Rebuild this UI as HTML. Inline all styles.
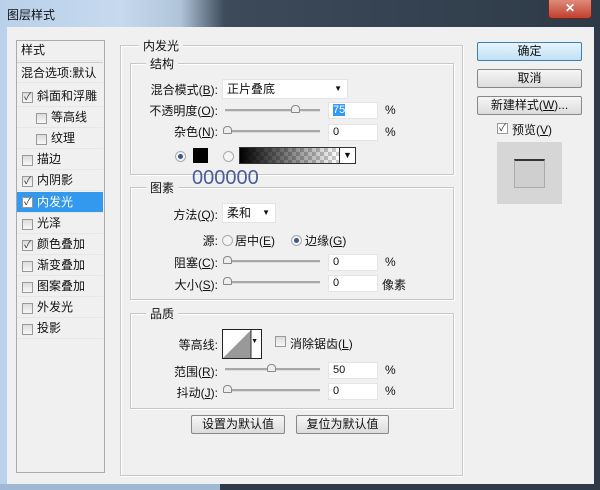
<!DOCTYPE html>
<html><head><meta charset="utf-8"><style>
*{margin:0;padding:0;box-sizing:border-box}
body{width:600px;height:490px;overflow:hidden;position:relative;background:#f0f0f0;font-family:"Liberation Sans","Noto Sans CJK SC",sans-serif;font-size:12px;color:#111}
.a{position:absolute;white-space:nowrap}
.title{left:0;top:0;width:600px;height:27px;background:linear-gradient(90deg,#b9d1ea 0%,#c6d9ee 20%,#b0c4da 30%,#3c4a5a 37.5%,#2e3a47 100%)}
.lbl{text-align:right;width:100px}
.box{position:absolute;border:1px solid #c8c8c8;box-shadow:1px 1px 0 #fff inset,1px 1px 0 #fff}
.gt{position:absolute;background:#f0f0f0;padding:0 4px;font-size:12px}
.inp{position:absolute;background:#fff;border:1px solid #e4e4e4;height:17px;padding-left:4px;line-height:15px;font-size:11px}
.sl{position:absolute;height:3px;background:#a8a8a8;border-bottom:1px solid #ddd}
.th{position:absolute;width:9px;height:8px;top:-4px;background:#eee;border:1px solid #888;border-radius:4px 4px 1px 1px}
.cb{position:absolute;width:11px;height:11px;border:1px solid #999;background:linear-gradient(#ddd,#f8f8f8);font-size:10px;line-height:9px;text-align:center;color:#333}
.btn{position:absolute;height:19px;border:1px solid #888;border-radius:2px;background:linear-gradient(#f6f6f6,#dcdcdc);text-align:center;line-height:17px;font-size:12px}
.rd{position:absolute;width:11px;height:11px;border-radius:50%;border:1px solid #aaa;background:#f4f4f4}
.rd.on::after{content:"";position:absolute;left:2px;top:2px;width:5px;height:5px;border-radius:50%;background:#3a5a8a}
.li{position:absolute;left:17px;width:86px;height:21px;line-height:21px;border-bottom:1px solid #e6e6e6}
</style></head><body>
<div class="a title"></div>
<div class="a" style="left:7px;top:6px;font-size:12px">图层样式</div>
<div class="a" style="left:548px;top:0;width:44px;height:19px;background:linear-gradient(#e08a7a,#c0402e);border:1px solid #6a2a22;border-top:none;border-radius:0 0 4px 4px;color:#fff;text-align:center;font-weight:bold;line-height:17px">✕</div>
<div class="a" style="left:0;top:27px;width:7px;height:463px;background:#b9d1ea"></div>
<div class="a" style="left:594px;top:27px;width:6px;height:463px;background:#2e3a47"></div>
<div class="a" style="left:0;top:484px;width:600px;height:6px;background:#2e3a47"></div>
<div class="a" style="left:0;top:484px;width:220px;height:6px;background:#9fb8d4"></div>

<div class="a" style="left:16px;top:40px;width:89px;height:433px;border:1px solid #aaa;background:#f0f0f0"></div>
<div class="li" style="top:40px;padding-left:4px">样式</div>
<div class="li" style="top:62px;padding-left:4px;border-top:1px solid #ccc">混合选项:默认</div>
<div class="li" style="top:86px;padding-left:20px">斜面和浮雕</div><div class="cb" style="left:22px;top:92px">✓</div>
<div class="li" style="top:107px;padding-left:34px">等高线</div><div class="cb" style="left:36px;top:113px"></div>
<div class="li" style="top:128px;padding-left:34px">纹理</div><div class="cb" style="left:36px;top:134px"></div>
<div class="li" style="top:149px;padding-left:20px">描边</div><div class="cb" style="left:22px;top:155px"></div>
<div class="li" style="top:170px;padding-left:20px">内阴影</div><div class="cb" style="left:22px;top:176px">✓</div>
<div class="li" style="top:192px;padding-left:20px;background:#3399ee;color:#fff">内发光</div><div class="cb" style="left:22px;top:197px;background:#fff">✓</div>
<div class="li" style="top:213px;padding-left:20px">光泽</div><div class="cb" style="left:22px;top:219px"></div>
<div class="li" style="top:234px;padding-left:20px">颜色叠加</div><div class="cb" style="left:22px;top:240px">✓</div>
<div class="li" style="top:255px;padding-left:20px">渐变叠加</div><div class="cb" style="left:22px;top:261px"></div>
<div class="li" style="top:276px;padding-left:20px">图案叠加</div><div class="cb" style="left:22px;top:282px"></div>
<div class="li" style="top:297px;padding-left:20px">外发光</div><div class="cb" style="left:22px;top:303px"></div>
<div class="li" style="top:318px;padding-left:20px">投影</div><div class="cb" style="left:22px;top:324px"></div>

<div class="box" style="left:120px;top:45px;width:343px;height:431px"></div>
<div class="gt" style="left:139px;top:37px">内发光</div>
<div class="box" style="left:130px;top:63px;width:324px;height:112px"></div>
<div class="gt" style="left:146px;top:55px">结构</div>
<div class="a lbl" style="left:118px;top:81px">混合模式(<u>B</u>):</div>
<div class="inp" style="left:222px;top:79px;width:126px;height:20px;font-size:12px;line-height:18px">正片叠底<span style="position:absolute;right:5px;font-size:8px">▼</span></div>
<div class="a lbl" style="left:118px;top:102px">不透明度(<u>O</u>):</div>
<div class="sl" style="left:225px;top:109px;width:95px"><div class="th" style="left:66px"></div></div>
<div class="inp" style="left:328px;top:102px;width:50px"><span style="background:#3399ff;color:#fff">75</span></div>
<div class="a" style="left:385px;top:103px">%</div>
<div class="a lbl" style="left:118px;top:123px">杂色(<u>N</u>):</div>
<div class="sl" style="left:225px;top:130px;width:95px"><div class="th" style="left:-2px"></div></div>
<div class="inp" style="left:328px;top:124px;width:50px">0</div>
<div class="a" style="left:385px;top:125px">%</div>
<div class="rd on" style="left:175px;top:151px"></div>
<div class="a" style="left:193px;top:148px;width:15px;height:15px;background:#000"></div>
<div class="rd" style="left:223px;top:151px"></div>
<div class="a" style="left:239px;top:147px;width:117px;height:17px;border:1px solid #333;background:repeating-conic-gradient(#ccc 0 25%,#fff 0 50%) 0 0/8px 8px"><div style="position:absolute;left:0;top:0;width:98px;height:15px;background:linear-gradient(90deg,#000,rgba(0,0,0,0))"></div><div style="position:absolute;right:0;top:0;width:16px;height:15px;background:#fff;border-left:1px solid #333;font-size:9px;text-align:center;line-height:15px">▼</div></div>
<div class="a" style="left:192px;top:167px;font-size:20px;color:#4a5c9a">000000</div>

<div class="box" style="left:130px;top:187px;width:324px;height:113px"></div>
<div class="gt" style="left:146px;top:179px">图素</div>
<div class="a lbl" style="left:118px;top:206px">方法(<u>Q</u>):</div>
<div class="inp" style="left:222px;top:203px;width:54px;height:20px;font-size:12px;line-height:18px">柔和<span style="position:absolute;right:5px;font-size:8px">▼</span></div>
<div class="a lbl" style="left:118px;top:232px">源:</div>
<div class="rd" style="left:222px;top:235px"></div><div class="a" style="left:235px;top:232px">居中(<u>E</u>)</div>
<div class="rd on" style="left:291px;top:235px"></div><div class="a" style="left:305px;top:232px">边缘(<u>G</u>)</div>
<div class="a lbl" style="left:118px;top:254px">阻塞(<u>C</u>):</div>
<div class="sl" style="left:225px;top:260px;width:95px"><div class="th" style="left:-2px"></div></div>
<div class="inp" style="left:328px;top:254px;width:50px">0</div>
<div class="a" style="left:385px;top:255px">%</div>
<div class="a lbl" style="left:118px;top:276px">大小(<u>S</u>):</div>
<div class="sl" style="left:225px;top:281px;width:95px"><div class="th" style="left:-2px"></div></div>
<div class="inp" style="left:328px;top:275px;width:50px">0</div>
<div class="a" style="left:382px;top:276px">像素</div>

<div class="box" style="left:130px;top:313px;width:324px;height:96px"></div>
<div class="gt" style="left:146px;top:305px">品质</div>
<div class="a lbl" style="left:118px;top:336px">等高线:</div>
<div class="a" style="left:222px;top:329px;width:40px;height:30px;border:1px solid #222;background:#fff;overflow:hidden">
<svg width="40" height="30" style="position:absolute;left:0;top:0"><polygon points="0,28 28,0 28,28" fill="#999"/><line x1="28" y1="0" x2="28" y2="30" stroke="#333"/></svg>
<span style="position:absolute;right:3px;top:8px;font-size:7px">▼</span></div>
<div class="cb" style="left:275px;top:336px"></div>
<div class="a" style="left:290px;top:335px">消除锯齿(<u>L</u>)</div>
<div class="a lbl" style="left:118px;top:363px">范围(<u>R</u>):</div>
<div class="sl" style="left:225px;top:368px;width:95px"><div class="th" style="left:42px"></div></div>
<div class="inp" style="left:328px;top:362px;width:50px">50</div>
<div class="a" style="left:385px;top:363px">%</div>
<div class="a lbl" style="left:118px;top:384px">抖动(<u>J</u>):</div>
<div class="sl" style="left:225px;top:389px;width:95px"><div class="th" style="left:-2px"></div></div>
<div class="inp" style="left:328px;top:383px;width:50px">0</div>
<div class="a" style="left:385px;top:384px">%</div>

<div class="btn" style="left:191px;top:415px;width:94px">设置为默认值</div>
<div class="btn" style="left:296px;top:415px;width:93px">复位为默认值</div>

<div class="btn" style="left:477px;top:42px;width:105px;border-color:#3c7fb1;background:linear-gradient(#e8f4fc,#bfe0f5)">确定</div>
<div class="btn" style="left:477px;top:69px;width:105px">取消</div>
<div class="btn" style="left:477px;top:96px;width:105px">新建样式(<u>W</u>)...</div>
<div class="cb" style="left:497px;top:123px;background:#fff">✓</div>
<div class="a" style="left:512px;top:121px">预览(<u>V</u>)</div>
<div class="a" style="left:497px;top:142px;width:65px;height:62px;background:#d6d6d6"></div>
<div class="a" style="left:514px;top:159px;width:31px;height:29px;background:#cfcfcf;border:1px solid #aaa;border-top:2px solid #333"></div>
</body></html>
